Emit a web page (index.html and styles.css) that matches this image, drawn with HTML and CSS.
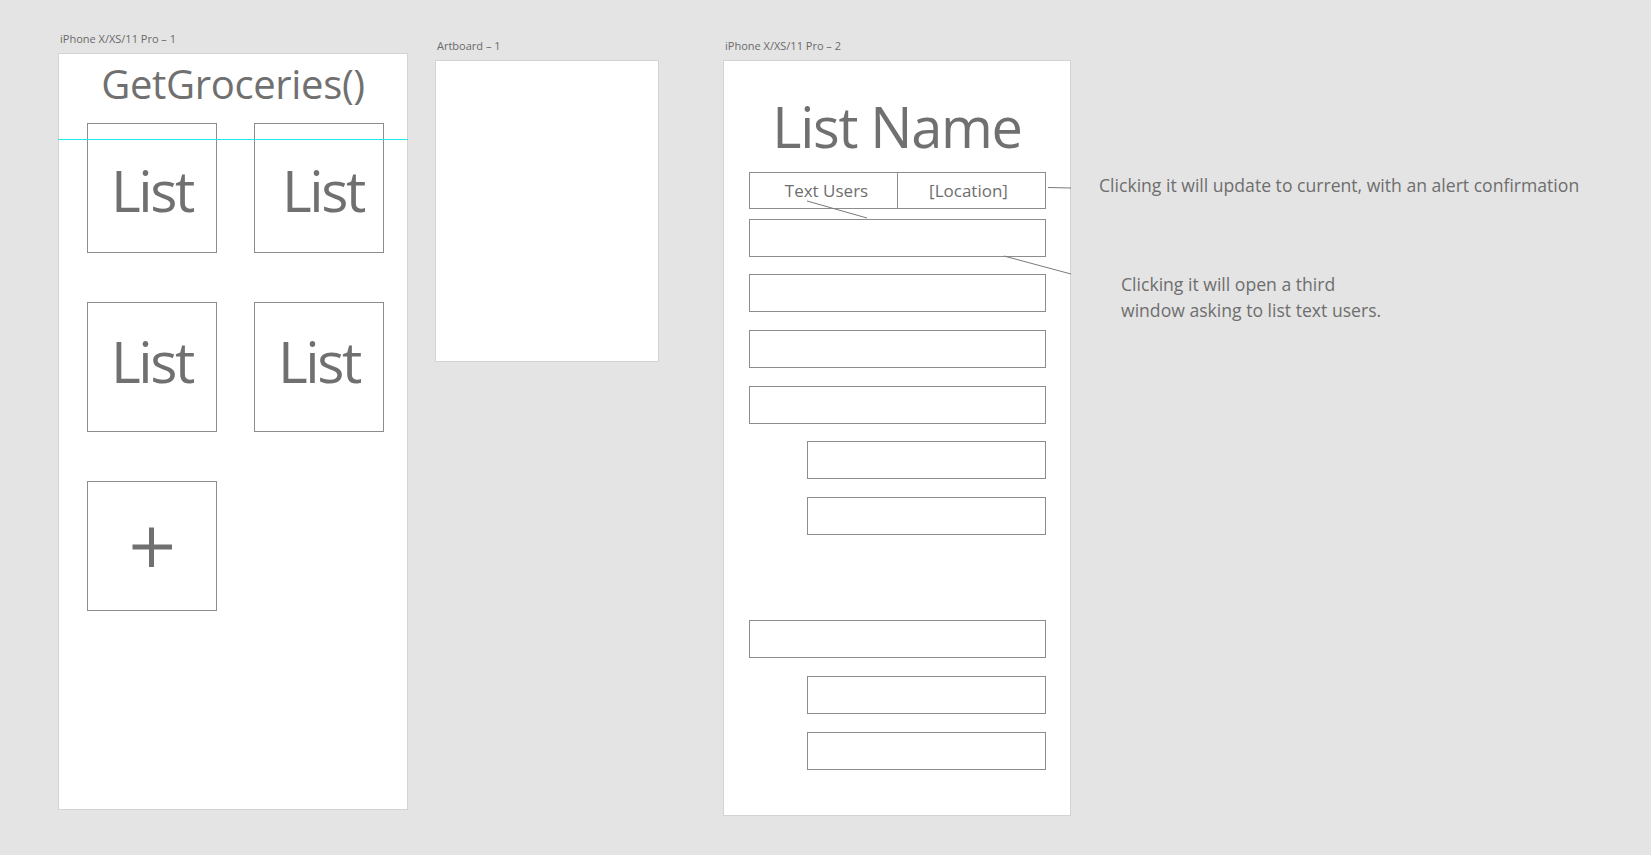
FILE: index.html
```html
<!DOCTYPE html>
<html lang="en">
<head>
<meta charset="utf-8">
<title>GetGroceries wireframes</title>
<link rel="stylesheet" href="styles.css">
</head>
<body>
<div class="canvas">
  <section class="frame frame-home">
    <div class="frame-label">iPhone X/XS/11 Pro – 1</div>
    <div class="board board-home">
      <h1 class="app-title">GetGroceries()</h1>
      <div class="tile-grid">
        <div class="tile tile-low">List</div>
        <div class="tile tile-low tile-shift">List</div>
        <div class="tile tile-high">List</div>
        <div class="tile tile-high">List</div>
        <div class="tile tile-add">
          <svg class="plus" width="40" height="40" viewBox="0 0 40 40"><path d="M19.5 0.5V40M0.5 20H40" stroke="#707070" stroke-width="5" fill="none"/></svg>
        </div>
      </div>
      <div class="guide"></div>
    </div>
  </section>

  <section class="frame frame-blank">
    <div class="frame-label">Artboard – 1</div>
    <div class="board board-blank"></div>
  </section>

  <section class="frame frame-list">
    <div class="frame-label">iPhone X/XS/11 Pro – 2</div>
    <div class="board board-list">
      <h2 class="list-title">List Name</h2>
      <div class="seg">
        <div class="seg-cell">Text Users</div>
        <div class="seg-cell seg-right">[Location]</div>
      </div>
      <div class="item"></div>
      <div class="item"></div>
      <div class="item"></div>
      <div class="item"></div>
      <div class="item item-sub"></div>
      <div class="item item-sub"></div>
      <div class="item item-gap"></div>
      <div class="item item-sub"></div>
      <div class="item item-sub"></div>
      <svg class="connectors" width="348" height="755" viewBox="0 0 348 755">
        <path d="M84 140L144 157" stroke="#7a7a7a" stroke-width="1" fill="none"/>
        <path d="M325 126.5L348 127" stroke="#7a7a7a" stroke-width="1" fill="none"/>
        <path d="M281 195L348 213" stroke="#7a7a7a" stroke-width="1" fill="none"/>
      </svg>
    </div>
  </section>

  <aside class="notes">
    <p class="note note-location">Clicking it will update to current, with an alert confirmation</p>
    <p class="note note-users">Clicking it will open a third<br>window asking to list text users.</p>
  </aside>
</div>
</body>
</html>
```

FILE: styles.css
```css
* { box-sizing: border-box; }

html, body {
  margin: 0;
  padding: 0;
  width: 1651px;
  height: 855px;
  overflow: hidden;
  background: #e4e4e4;
  font-family: "Open Sans", "Noto Sans", sans-serif;
  color: #707070;
}

.canvas {
  display: flex;
  align-items: flex-start;
  padding-left: 58px;
}

.frame-label {
  font-size: 11px;
  line-height: 14px;
  height: 14px;
  color: #6a6a6a;
  white-space: nowrap;
  padding-left: 1px;
}

.frame-home { padding-top: 32px; }
.frame-home .frame-label { margin-bottom: 7px; padding-left: 2px; }

.frame-blank { padding-top: 39px; margin-left: 27px; }
.frame-blank .frame-label { margin-bottom: 7px; padding-left: 2px; }

.frame-list { padding-top: 39px; margin-left: 64px; }
.frame-list .frame-label { margin-bottom: 7px; padding-left: 2px; }

.board {
  position: relative;
  background: #ffffff;
  border: 1px solid #d3d3d3;
}

.board-home {
  width: 350px;
  height: 757px;
  padding-top: 9.5px;
}

.board-blank {
  width: 224px;
  height: 302px;
}

.board-list {
  width: 348px;
  height: 756px;
  padding-top: 36.5px;
  padding-left: 25px;
}

.app-title {
  margin: 0;
  font-size: 40px;
  line-height: 40px;
  font-weight: 400;
  letter-spacing: -0.35px;
  text-align: center;
  color: #707070;
}

.tile-grid {
  margin-top: 19.5px;
  margin-left: 28px;
  display: grid;
  grid-template-columns: 130px 130px;
  column-gap: 37px;
  row-gap: 49px;
}

.tile {
  width: 130px;
  height: 130px;
  border: 1px solid #8c8c8c;
  font-size: 57px;
  line-height: 57px;
  letter-spacing: -2.4px;
  color: #707070;
  text-align: center;
}

.tile-low { padding-top: 38px; }
.tile-high { padding-top: 30px; }
.tile-shift { padding-left: 8px; }

.tile-add {
  display: flex;
  align-items: center;
  justify-content: center;
  padding-top: 1px;
}

.guide {
  position: absolute;
  left: -1px;
  right: -1px;
  top: 85px;
  height: 1px;
  background: #1fe8ee;
}

.list-title {
  margin: 0 0 18px -25px;
  width: 346px;
  font-size: 56px;
  line-height: 56px;
  font-weight: 400;
  letter-spacing: -1.3px;
  text-align: center;
  color: #707070;
}

.seg {
  display: grid;
  grid-template-columns: 147px 1fr;
  width: 297px;
  height: 37px;
  border: 1px solid #8c8c8c;
}

.seg-cell {
  font-size: 17px;
  line-height: 35px;
  text-align: center;
  color: #6e6e6e;
  padding-left: 6px;
}

.seg-right {
  border-left: 1px solid #8c8c8c;
  padding-left: 0;
  padding-right: 6px;
}

.item {
  width: 297px;
  height: 38px;
  border: 1px solid #8c8c8c;
  margin-top: 17.7px;
}

.seg + .item { margin-top: 10px; }

.item-sub {
  width: 239px;
  margin-left: 58px;
}

.item-gap { margin-top: 85.3px; }

.connectors {
  position: absolute;
  left: -1px;
  top: 0;
  overflow: visible;
  pointer-events: none;
}

.notes {
  margin-left: 28px;
  padding-top: 173px;
}

.note {
  margin: 0;
  font-size: 17.6px;
  color: #6e6e6e;
  white-space: nowrap;
}

.note-location { line-height: 24px; }

.note-users {
  margin-top: 73.8px;
  margin-left: 22px;
  line-height: 26.6px;
}
```
